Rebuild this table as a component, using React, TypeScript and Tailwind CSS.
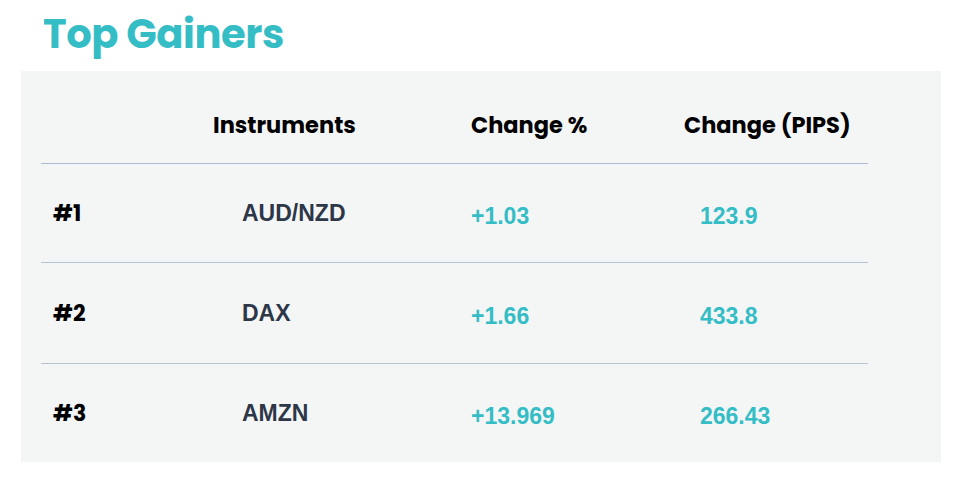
const rows = [
  { rank: '#1', name: 'AUD/NZD', pct: '+1.03', pips: '123.9' },
  { rank: '#2', name: 'DAX', pct: '+1.66', pips: '433.8' },
  { rank: '#3', name: 'AMZN', pct: '+13.969', pips: '266.43' },
];

const cols = 'grid grid-cols-[172px_258px_213px_184px]';

export default function App() {
  return (
    <div className="w-[965px] h-[488px] bg-white">
      {/* Title */}
      <div className="h-[71px] flex items-center pl-[43px] pb-[4px]">
        <h1 className="text-[40px] font-bold text-[#35bdc6] tracking-[-0.4px] leading-none font-['Poppins','Inter',sans-serif]">
          Top Gainers
        </h1>
      </div>

      {/* Table panel */}
      <div className="ml-[21px] w-[920px] h-[391px] bg-[#f4f6f6] pl-[20px]">
        <div className="w-[827px]">
          <div className={`${cols} h-[93px] items-center pt-[18px] border-b border-[#aebbd4] text-[22.5px] font-bold text-black font-['Poppins','Inter',sans-serif]`}>
            <div />
            <div>Instruments</div>
            <div>Change %</div>
            <div>Change (PIPS)</div>
          </div>

          {rows.map((r, i) => (
            <div
              key={r.rank}
              className={`${cols} items-center ${i === 0 ? 'h-[99px]' : i === 1 ? 'h-[101px]' : 'h-[98px]'} ${i < rows.length - 1 ? 'border-b border-[#b8c2d5]' : ''}`}
            >
              <div className="pl-[12px] text-[22px] font-bold text-black font-['Poppins','Inter',sans-serif]">
                {r.rank}
              </div>
              <div className="pl-[29px] text-[23px] font-bold text-[#2d3748] font-['Liberation_Sans',Arial,sans-serif]">
                {r.name}
              </div>
              <div className="pt-[6px] text-[23px] font-bold text-[#35bdc6] font-['Liberation_Sans',Arial,sans-serif]">
                {r.pct}
              </div>
              <div className="pl-[16px] pt-[6px] text-[23px] font-bold text-[#35bdc6] font-['Liberation_Sans',Arial,sans-serif]">
                {r.pips}
              </div>
            </div>
          ))}
        </div>
      </div>
    </div>
  );
}
